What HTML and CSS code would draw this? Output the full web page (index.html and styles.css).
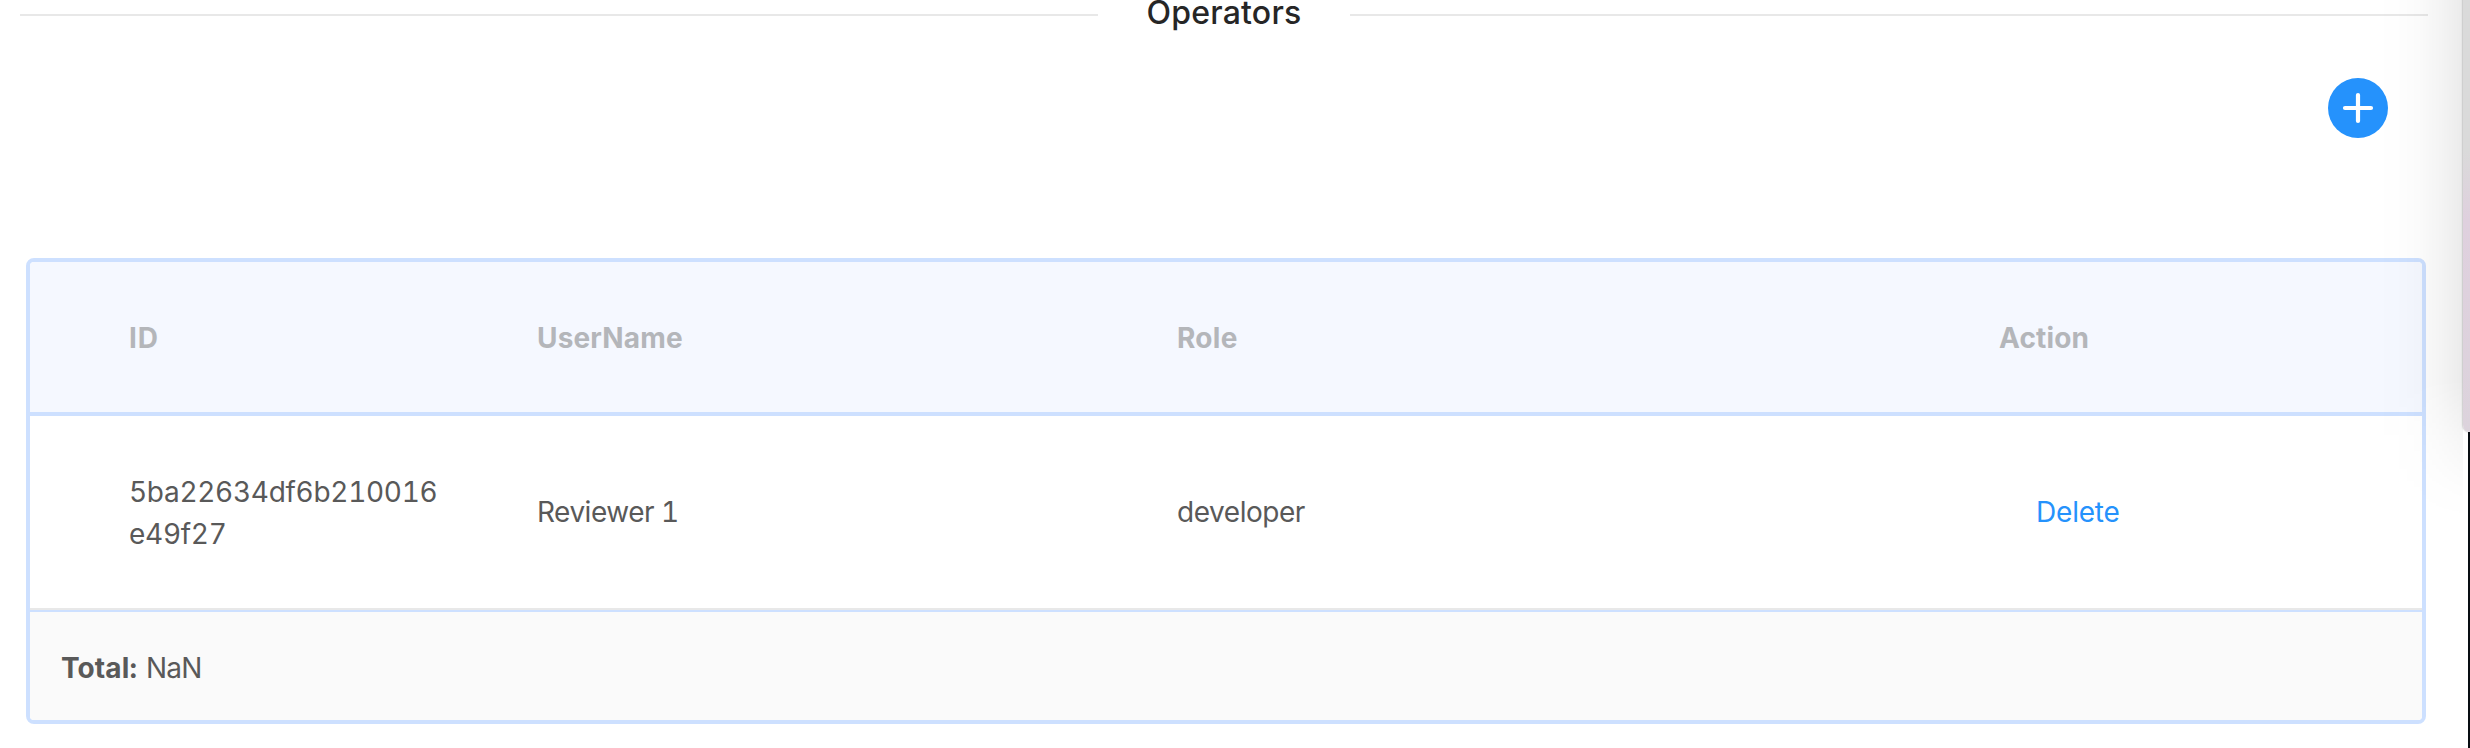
FILE: index.html
```html
<!DOCTYPE html>
<html lang="en">
<head>
<meta charset="utf-8">
<title>Operators</title>
<link rel="stylesheet" href="styles.css">
</head>
<body>
<main class="page">
  <h1 class="divider"><span class="divider-text">Operators</span></h1>
  <div class="toolbar">
    <button class="add" aria-label="Add operator">
      <svg viewBox="0 0 60 60" width="60" height="60"><circle cx="30" cy="30" r="30" fill="#2592fc"/><path d="M17 30H43M30 17V43" stroke="#fff" stroke-width="4.2" stroke-linecap="round"/></svg>
    </button>
  </div>
  <section class="table">
    <div class="row head">
      <div class="cell"><span class="t-id">ID</span></div>
      <div class="cell"><span class="t-user">UserName</span></div>
      <div class="cell"><span class="t-role">Role</span></div>
      <div class="cell"><span class="t-action">Action</span></div>
    </div>
    <div class="row body">
      <div class="cell cell-hash"><span class="t-hash">5ba22634df6b210016<br>e49f27</span></div>
      <div class="cell"><span class="t-name">Reviewer 1</span></div>
      <div class="cell"><span class="t-dev">developer</span></div>
      <div class="cell"><a class="delete">Delete</a></div>
    </div>
    <div class="footer"><b class="total">Total:</b><span class="nan">NaN</span></div>
  </section>
</main>
<div class="edge"></div>
<div class="window"></div>
</body>
</html>
```
FILE: styles.css
```css
* { box-sizing: border-box; }
body {
  margin: 0;
  width: 2470px;
  height: 748px;
  overflow: hidden;
  position: relative;
  background: #fff;
  color: #595959;
  font: 28px/42px Inter, "Liberation Sans", sans-serif;
  font-variant-numeric: tabular-nums;
}
.page { padding: 0 42px 0 20px; }
.divider {
  display: flex;
  align-items: center;
  height: 30px;
  margin: 0;
  font-size: 32px;
  font-weight: 500;
  line-height: 30px;
  letter-spacing: .2px;
  color: #262626;
}
.divider::before, .divider::after {
  content: "";
  flex: 1;
  height: 2px;
  background: #e8e8e8;
}
.divider-text {
  width: 252px;
  text-align: center;
  margin-top: -5px;
}
.toolbar {
  display: flex;
  justify-content: flex-end;
  padding: 47.5px 40px 0 0;
  height: 228px;
}
.add { width: 60px; height: 60px; padding: 0; border: 0; background: none; }
.add svg { display: block; }
.table {
  width: 2400px;
  height: 466px;
  margin-left: 6px;
  border: 4px solid #cde0ff;
  border-radius: 8px;
  overflow: hidden;
}
.row {
  display: grid;
  grid-template-columns: 408px 640px 822px 522px;
  align-items: center;
}
.cell { padding-left: 99px; white-space: nowrap; }
.head {
  height: 154px;
  padding-top: 2px;
  background: #f5f8ff;
  border-bottom: 4px solid #cde0ff;
  font-weight: 700;
  color: #b4b6ba;
}
.t-id { letter-spacing: .9px; }
.t-user, .t-action { letter-spacing: .15px; }
.t-role { letter-spacing: .3px; }
.body { height: 194px; border-bottom: 2px solid #e8e8e8; }
.cell-hash { padding-top: 2px; }
.t-hash { letter-spacing: -.3px; }
.t-name { letter-spacing: -.5px; }
.t-dev { letter-spacing: -.45px; }
.delete { color: #2592fc; margin-left: 37px; letter-spacing: -.2px; }
.footer {
  height: 110px;
  padding: 4px 0 0 31px;
  border-top: 2px solid #cde0ff;
  background: #fafafa;
  display: flex;
  align-items: center;
  gap: 9px;
}
.total { letter-spacing: .1px; }
.nan { letter-spacing: -.8px; }
.edge {
  position: absolute;
  right: 0;
  bottom: 0;
  width: 2px;
  height: 316px;
  background: #080d12;
}
.window {
  position: absolute;
  right: 0;
  top: -200px;
  width: 7px;
  height: 632px;
  border-radius: 0 0 0 7px;
  background: linear-gradient(#dadada 350px, #dfd0de 420px, #dcd3dc 100%);
  box-shadow: 0 0 2px rgba(0,0,0,.45);
}
.window::before {
  content: "";
  position: absolute;
  right: 7px;
  top: 200px;
  width: 90px;
  height: 520px;
  background: linear-gradient(to left, rgba(0,0,0,.08), rgba(0,0,0,.045) 25%, rgba(0,0,0,.016) 50%, rgba(0,0,0,.005) 75%, transparent);
  mask-image: linear-gradient(#000 380px, rgba(0,0,0,.45) 440px, rgba(0,0,0,.1) 490px, transparent 520px);
}
```
